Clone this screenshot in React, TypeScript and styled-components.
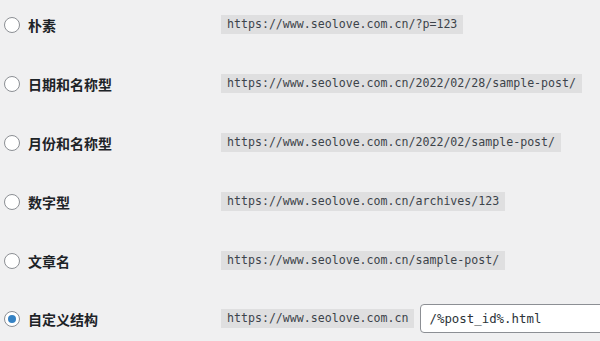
import React from "react";
import styled, { createGlobalStyle } from "styled-components";

const GlobalStyle = createGlobalStyle`
  html, body {
    margin: 0;
    padding: 0;
    background: #f0f0f1;
    overflow: hidden;
  }
  body {
    font-family: "Noto Sans CJK SC", "Noto Sans", sans-serif;
    color: #1d2327;
  }
`;

interface StructureOption {
  label: string;
  sample: string;
  custom?: string;
}

const options: StructureOption[] = [
  { label: "朴素", sample: "https://www.seolove.com.cn/?p=123" },
  { label: "日期和名称型", sample: "https://www.seolove.com.cn/2022/02/28/sample-post/" },
  { label: "月份和名称型", sample: "https://www.seolove.com.cn/2022/02/sample-post/" },
  { label: "数字型", sample: "https://www.seolove.com.cn/archives/123" },
  { label: "文章名", sample: "https://www.seolove.com.cn/sample-post/" },
  { label: "自定义结构", sample: "https://www.seolove.com.cn", custom: "/%post_id%.html" },
];

const App = () => {
  return (
    <>
      <GlobalStyle />
      <Table>
        {options.map((opt, i) => (
          <Row key={i}>
            <Radio checked={!!opt.custom} />
            <Label>{opt.label}</Label>
            <Sample>
              <Code>{opt.sample}</Code>
              {opt.custom && <CustomInput defaultValue={opt.custom} />}
            </Sample>
          </Row>
        ))}
      </Table>
    </>
  );
};

// Styled Components
const Table = styled.div`
  display: grid;
  grid-auto-rows: 59px;
  margin-top: -5px;
  width: 600px;
  overflow: hidden;
`;

const Row = styled.div`
  display: grid;
  grid-template-columns: 16px 185px 1fr;
  column-gap: 8px;
  align-items: center;
  padding-left: 4px;

  &:last-child {
    margin-top: -2px;
  }
`;

const Radio = styled.span<{ checked: boolean }>`
  box-sizing: border-box;
  width: 16px;
  height: 16px;
  border-radius: 50%;
  border: 1px solid #8c8f94;
  background: #fff;
  display: flex;
  align-items: center;
  justify-content: center;

  &::after {
    content: "";
    display: ${p => (p.checked ? "block" : "none")};
    width: 8px;
    height: 8px;
    border-radius: 50%;
    background: #3582c4;
  }
`;

const Label = styled.span`
  font-size: 14px;
  font-weight: 600;
  line-height: 19px;
  margin-top: 2px;
  white-space: nowrap;
`;

const Sample = styled.div`
  display: flex;
  align-items: center;
  gap: 6px;
  white-space: nowrap;
  min-width: 0;
  overflow: hidden;
`;

const Code = styled.code`
  font-family: "DejaVu Sans Mono", "Liberation Mono", monospace;
  font-size: 11.6px;
  line-height: 19px;
  height: 19px;
  padding: 0 6px;
  background: #dfdfe0;
  color: #3c434a;
`;

const CustomInput = styled.input`
  box-sizing: border-box;
  flex: 0 0 auto;
  width: 240px;
  height: 29px;
  padding: 0 8px;
  border: 1px solid #8c8f94;
  border-radius: 4px;
  background: #fff;
  color: #2c3338;
  font-family: "DejaVu Sans Mono", "Liberation Mono", monospace;
  font-size: 12.4px;
  outline: none;
`;

export default App;
